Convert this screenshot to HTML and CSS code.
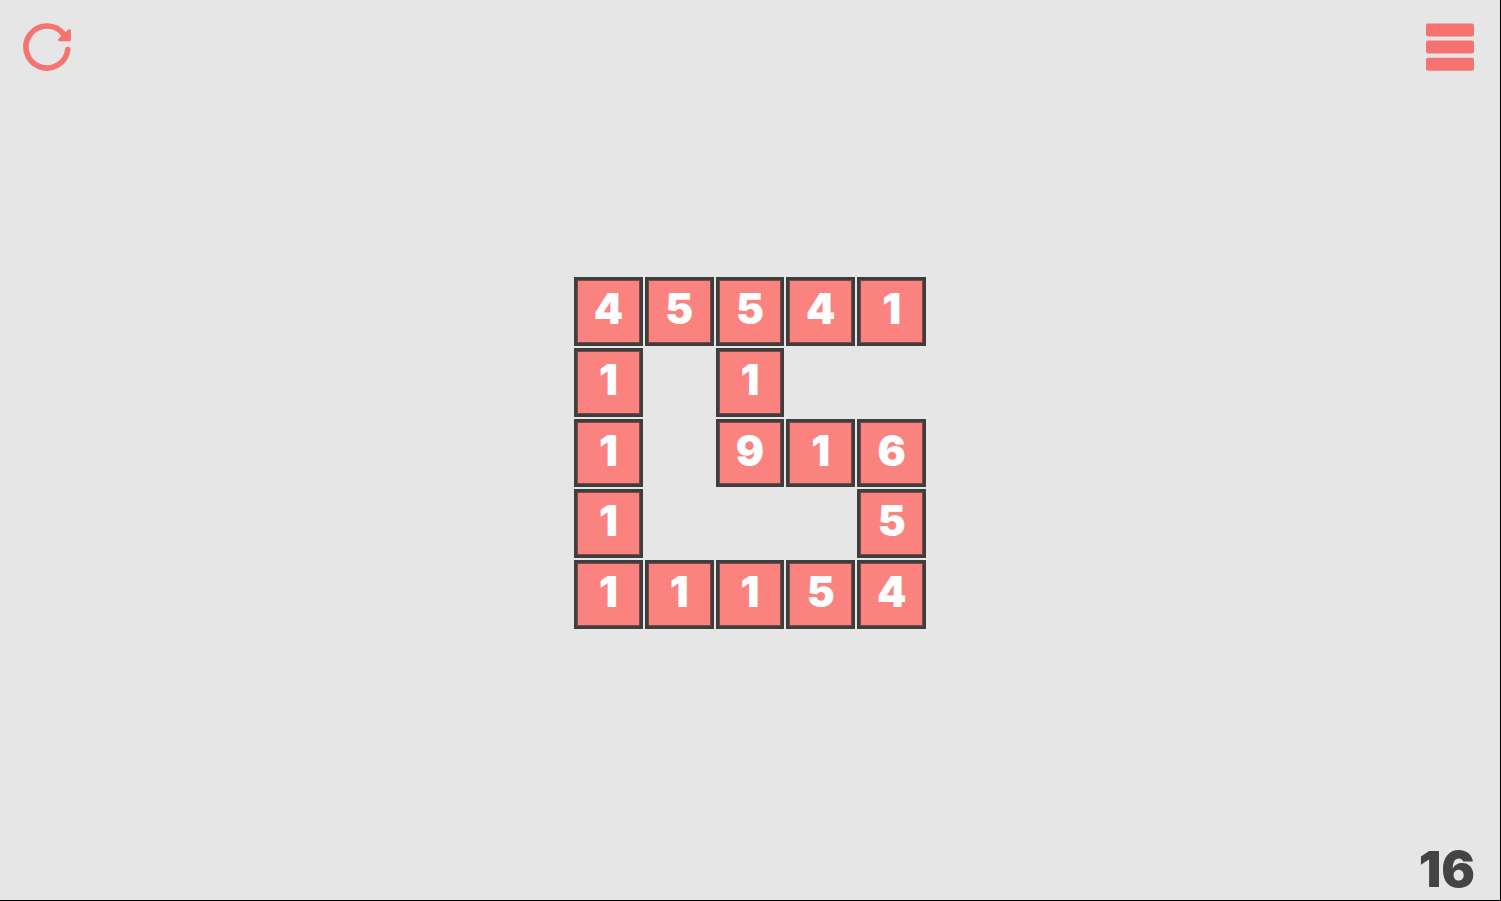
FILE: index.html
```html
<!DOCTYPE html>
<html lang="en">
<head>
<meta charset="utf-8">
<title>Number Puzzle</title>
<link rel="stylesheet" href="styles.css">
</head>
<body>
<div class="game">
  <header class="toolbar">
    <button class="icon-button" type="button" aria-label="Restart">
      <svg class="icon" viewBox="0 0 48 48" aria-hidden="true">
        <path class="ring" d="M44.8 26.5A21 21 0 1 1 41 11.8"/>
        <path class="arrow" d="M46.4 7.5V16.8H36.5Z"/>
      </svg>
    </button>
    <button class="icon-button" type="button" aria-label="Menu">
      <svg class="icon" viewBox="0 0 48 48" aria-hidden="true">
        <rect class="bar" x="0" y="0.5" width="48" height="13" rx="2"/>
        <rect class="bar" x="0" y="17.5" width="48" height="13" rx="2"/>
        <rect class="bar" x="0" y="34.7" width="48" height="13" rx="2"/>
      </svg>
    </button>
  </header>
  <main class="stage">
    <div class="board">
      <button class="tile" type="button">4</button>
      <button class="tile" type="button">5</button>
      <button class="tile" type="button">5</button>
      <button class="tile" type="button">4</button>
      <button class="tile" type="button">1</button>

      <button class="tile" type="button">1</button>
      <span class="empty"></span>
      <button class="tile" type="button">1</button>
      <span class="empty"></span>
      <span class="empty"></span>

      <button class="tile" type="button">1</button>
      <span class="empty"></span>
      <button class="tile" type="button">9</button>
      <button class="tile" type="button">1</button>
      <button class="tile" type="button">6</button>

      <button class="tile" type="button">1</button>
      <span class="empty"></span>
      <span class="empty"></span>
      <span class="empty"></span>
      <button class="tile" type="button">5</button>

      <button class="tile" type="button">1</button>
      <button class="tile" type="button">1</button>
      <button class="tile" type="button">1</button>
      <button class="tile" type="button">5</button>
      <button class="tile" type="button">4</button>
    </div>
  </main>
  <footer class="status">
    <span class="level">16</span>
  </footer>
</div>
</body>
</html>
```
FILE: styles.css
```css
* {
  box-sizing: border-box;
}

body {
  margin: 0;
  background: #e6e6e6;
  font-family: Inter, "Liberation Sans", sans-serif;
}

.game {
  display: flex;
  flex-direction: column;
  min-height: 100vh;
  border-right: 1px solid #000;
  border-bottom: 1px solid #000;
}

.toolbar {
  display: flex;
  justify-content: space-between;
  padding: 23px 26px 24px 23px;
}

.icon-button {
  display: block;
  padding: 0;
  border: 0;
  background: none;
  cursor: pointer;
}

.icon {
  display: block;
  width: 48px;
  height: 48px;
}

.ring {
  fill: none;
  stroke: #f77371;
  stroke-width: 5.6;
  stroke-linecap: round;
}

.arrow {
  fill: #f77371;
  stroke: #f77371;
  stroke-width: 3;
  stroke-linejoin: round;
}

.bar {
  fill: #f77371;
}

.stage {
  flex: 1;
  display: flex;
  align-items: center;
  justify-content: center;
}

.board {
  display: grid;
  grid-template-columns: repeat(5, 1fr);
  gap: 2px;
  width: 352px;
}

.tile {
  display: flex;
  align-items: center;
  justify-content: center;
  aspect-ratio: 1;
  padding: 0 0 5px;
  border: 3px solid #3e3e3e;
  background: #fa827f;
  box-shadow: inset 0 0 0 1px #774846;
  color: #fff;
  font-family: inherit;
  font-size: 42px;
  font-weight: 900;
  line-height: 1;
  cursor: pointer;
}

.status {
  display: flex;
  align-items: flex-end;
  justify-content: flex-end;
  min-height: 89px;
  padding: 0 25px 5px;
}

.level {
  color: #444;
  font-size: 50px;
  font-weight: 900;
  line-height: 52px;
}
```
